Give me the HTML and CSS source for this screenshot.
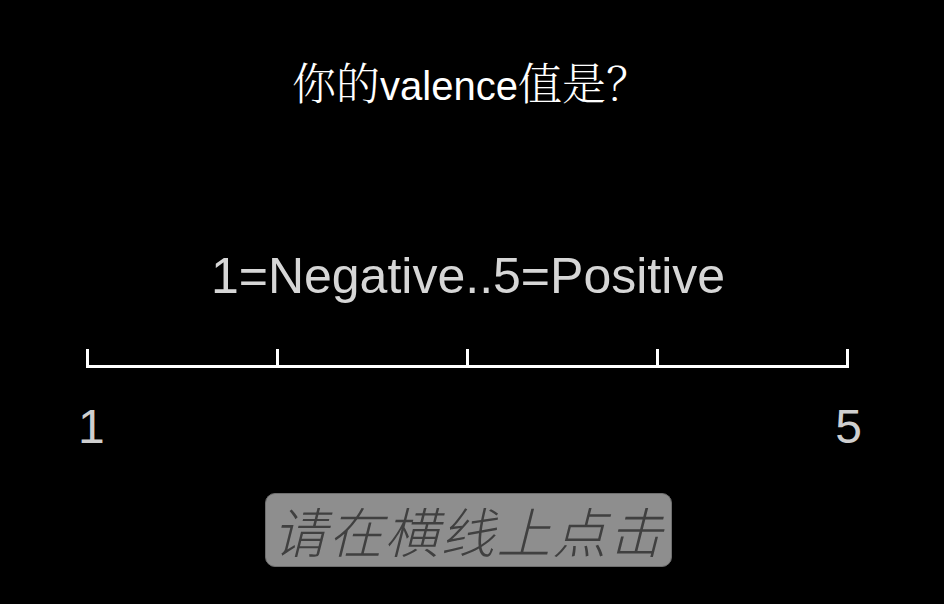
FILE: index.html
```html
<!DOCTYPE html>
<html lang="zh">
<head>
<meta charset="utf-8">
<title>valence</title>
<link rel="stylesheet" href="styles.css">
</head>
<body>
<main class="screen">
  <h1 class="question"><span class="cjk">你的</span>valence<span class="cjk">值是？</span></h1>
  <p class="legend">1=Negative..5=Positive</p>
  <div class="scale">
    <span class="tick"></span>
    <span class="tick"></span>
    <span class="tick"></span>
    <span class="tick"></span>
    <span class="tick"></span>
  </div>
  <div class="labels">
    <span>1</span>
    <span>5</span>
  </div>
  <div class="hint-row">
    <div class="hint">请在横线上点击</div>
  </div>
</main>
</body>
</html>
```

FILE: styles.css
```css
html, body {
  margin: 0;
  padding: 0;
  background: #000;
}

.screen {
  width: 944px;
  height: 604px;
  display: flex;
  flex-direction: column;
  overflow: hidden;
}

.question {
  margin: 54px 0 0;
  padding-right: 2px;
  text-align: center;
  font-family: "Liberation Sans", Arial, sans-serif;
  font-weight: normal;
  font-size: 40px;
  line-height: 54px;
  color: #fff;
}

.question .cjk {
  font-family: "Noto Serif CJK SC", "Noto Sans CJK SC", serif;
  font-weight: 300;
  font-size: 44px;
}

.legend {
  margin: 135px 0 0;
  padding-right: 8px;
  text-align: center;
  font-family: "Liberation Sans", Arial, sans-serif;
  font-size: 50px;
  line-height: 56px;
  color: #d6d6d6;
}

.scale {
  margin: 45px 0 0 86px;
  width: 763px;
  height: 16px;
  border-bottom: 3px solid #fff;
  display: flex;
  justify-content: space-between;
}

.tick {
  width: 3px;
  height: 16px;
  background: #fff;
}

.labels {
  margin: 33px 0 0 78px;
  width: 784px;
  display: flex;
  justify-content: space-between;
  font-family: "Liberation Sans", Arial, sans-serif;
  font-size: 48px;
  line-height: 52px;
  color: #cfcfcf;
}

.hint-row {
  margin-top: 40px;
  display: flex;
  justify-content: center;
  padding-right: 7px;
}

.hint {
  width: 407px;
  height: 74px;
  box-sizing: border-box;
  border: 1px solid #6e6e6e;
  border-radius: 10px;
  background: #8e8e8e;
  font-family: "Noto Sans CJK SC", sans-serif;
  font-style: italic;
  font-weight: 300;
  font-size: 54px;
  line-height: 71px;
  color: #404040;
  text-align: center;
  letter-spacing: 2px;
}
```
